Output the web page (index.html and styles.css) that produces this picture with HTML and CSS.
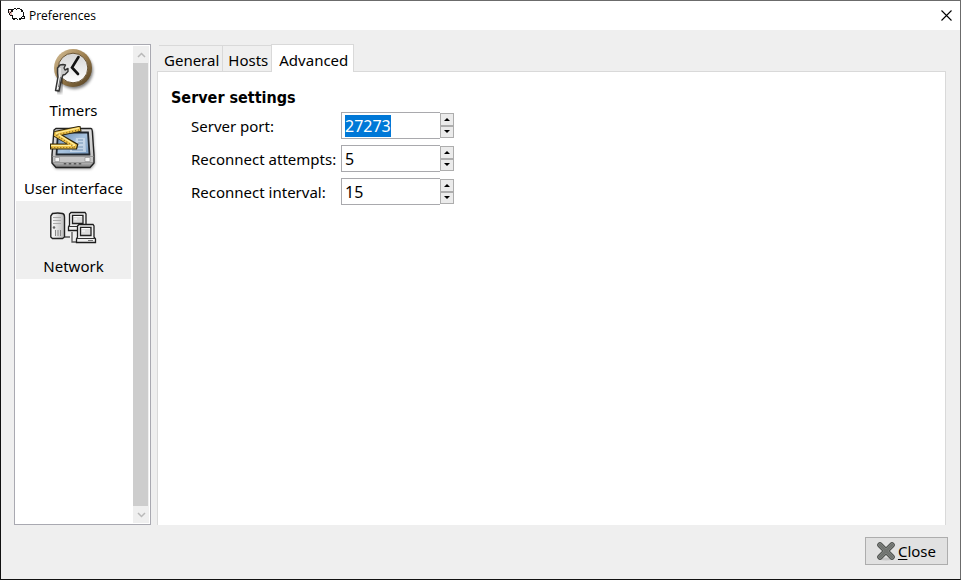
FILE: index.html
```
<!DOCTYPE html>
<html lang="en">
<head>
<meta charset="utf-8">
<title>Preferences</title>
<link rel="stylesheet" href="styles.css">
</head>
<body>
<div class="window">
  <header class="titlebar">
    <svg class="app-icon" width="17" height="13" viewBox="0 0 17 13" shape-rendering="crispEdges" aria-hidden="true">
      <path d="M4 2H14V4H15V9H12V11H5V9H4Z" fill="#fff"/>
      <path d="M1 3H4V7H1Z" fill="#e5b3ae"/>
      <path d="M0 1H4V2H0ZM0 2H1V5H0ZM3 2H5V4H3ZM2 4H3V5H2ZM1 5H2V7H1ZM2 7H5V8H2ZM4 1H6V2H4ZM6 0H8V1H6ZM8 1H9V2H8ZM9 0H12V1H9ZM12 1H14V2H12ZM13 2H15V4H13ZM15 4H16V8H15ZM14 8H16V9H14ZM16 8H17V11H16ZM14 10H16V11H14ZM13 9H14V11H13ZM11 10H13V12H11ZM9 11H10V12H9ZM7 10H9V11H7ZM5 10H7V12H5ZM4 8H5V11H4Z" fill="#111"/>
    </svg>
    <h1 class="title">Preferences</h1>
    <button class="window-close" type="button" aria-label="Close window">
      <svg width="11" height="11" viewBox="0 0 11 11" aria-hidden="true"><path d="M.5 .5L10.500 10.500M10.500 .5L.5 10.500" stroke="#000" stroke-width="1.100"/></svg>
    </button>
  </header>

  <main class="content">
    <nav class="sidebar" aria-label="Categories">
      <div class="categories">
        <button class="category" type="button">
          <svg width="48" height="48" viewBox="1 0 48 48" aria-hidden="true">
            <defs>
              <linearGradient id="rim" x1="0" y1="0" x2="1" y2="1"><stop offset="0" stop-color="#d9c39c"/><stop offset=".5" stop-color="#9a7c4c"/><stop offset="1" stop-color="#4d3b1e"/></linearGradient>
              <linearGradient id="face" x1="0" y1="0" x2="0" y2="1"><stop offset="0" stop-color="#d4d4d4"/><stop offset="1" stop-color="#fff"/></linearGradient>
              <filter id="soft"><feGaussianBlur stdDeviation="1.500"/></filter>
            </defs>
            <circle cx="25.500" cy="22.500" r="18.500" fill="#000" opacity=".5" filter="url(#soft)"/>
            <circle cx="24" cy="20" r="19" fill="url(#rim)"/>
            <circle cx="24" cy="20" r="14.800" fill="url(#face)" stroke="#6b5636"/>
            <path d="M29.500 9L23 19.500L29 26" fill="none" stroke="#111" stroke-width="2.600" stroke-linecap="round"/>
            <path d="M9 45L13 28" fill="none" stroke="#000" stroke-width="7" opacity=".4" filter="url(#soft)"/>
            <path d="M14 16.500L16.500 17L15 20L16 22L19 20.500V23.500L16 26.500L14 27L12.500 31L10 43L6.500 42.500L9 29L8.500 25V20L11 17Z" fill="#c9c9c9" stroke="#333" stroke-width="1.400" stroke-linejoin="round"/>
            <path d="M11 20V26L8.500 41" fill="none" stroke="#fff"/>
            <path d="M11.500 29L9.500 39" fill="none" stroke="#777"/>
          </svg>
          <span>Timers</span>
        </button>
        <button class="category" type="button">
          <svg width="48" height="48" viewBox="1 0 48 48" aria-hidden="true">
            <defs>
              <linearGradient id="screen" x1="0" y1="0" x2="1" y2="1"><stop offset="0" stop-color="#5e83ad"/><stop offset=".5" stop-color="#a9c4df"/><stop offset="1" stop-color="#7397be"/></linearGradient>
              <linearGradient id="case" x1="0" y1="0" x2="0" y2="1"><stop offset="0" stop-color="#ddd"/><stop offset=".85" stop-color="#c4c4c4"/><stop offset="1" stop-color="#777"/></linearGradient>
            </defs>
            <path d="M5 8L44 4L46 38L42 43H7L4 39Z" fill="#000" opacity=".4" filter="url(#soft)"/>
            <path d="M7 2.500H42Q43 2.500 43.300 5L45 29V37L41 41.500H7L3 37V29L5 4Z" fill="url(#case)" stroke="#222" stroke-width="1.400"/>
            <path d="M3.500 30.500H44.500M4 36.500H44" stroke="#999" stroke-width="1"/>
            <path d="M9 6.500H39L40.500 28.500H7.500Z" fill="url(#screen)" stroke="#20262d" stroke-width="1.800"/>
            <path d="M27 12H36L37 26H21V19H26Z" fill="#d5e3ef" opacity=".7"/>
            <path d="M22 21H34M23 24H34M29 14H34M29 17H34" stroke="#7594b5"/>
            <path d="M6 31.500H10.500V35.500H6ZM36 31.500H41V35.500H36Z" fill="#f4f4f4" stroke="#888" stroke-width=".6"/>
            <path d="M16 37V38.500M21 37V38.500M26 37V38.500M31 37V38.500" stroke="#555" stroke-width="2.500"/>
            <g fill="none" stroke-linejoin="bevel"><path d="M32 2.500L6 8L28 20.500H1" stroke="#2f260c" stroke-width="6"/><path d="M31 2.700L6 8L27 20.500H2" stroke="#efc247" stroke-width="4"/><path d="M30 2L7 7L26 19M2 19.500H26" stroke="#fff0a0" stroke-width="1.200"/><path d="M30 4L7 9L26 21.500H2" stroke="#806220" stroke-width="1.200" stroke-dasharray="1 2"/></g>
          </svg>
          <span>User interface</span>
        </button>
        <button class="category selected" type="button" aria-current="true">
          <svg width="48" height="48" viewBox="1 0 48 48" aria-hidden="true">
            <defs><linearGradient id="tower"><stop offset="0" stop-color="#fff"/><stop offset="1" stop-color="#bbb"/></linearGradient></defs>
            <path d="M16 33H21M23 28V38H28" fill="none" stroke="#555" stroke-width="1.300"/>
            <path d="M3.500 9.500Q9 8.500 13.500 9.500Q15.500 10 15.500 13V33L13.500 34.500H3.500L1.800 33V12Z" fill="url(#tower)" stroke="#222" stroke-width="1.400"/>
            <path d="M4 13.500H12M4 16.500H12M4 19.500H12" stroke="#aaa"/>
            <path d="M6.500 26V32M9 26V32M11.500 26V32" stroke="#888"/><circle cx="5" cy="23.500" r="1.300" fill="#666"/>
            <g id="computer"><path d="M22 8.500H36L37 10V21L38.500 23V26.500H19.500V23L20.500 21V10Z" fill="#f1f1f1" stroke="#1c1c1c" stroke-width="1.300"/><path d="M23.500 11.500H34V19.500H23.500Z" fill="#ddd" stroke="#222" stroke-width="1.300"/><path d="M24.500 12.500H33M25 15H28" stroke="#fff"/><path d="M20 22.500H38" stroke="#333"/><path d="M31 24.500H36" stroke="#777"/></g>
            <use href="#computer" x="8" y="12"/>
          </svg>
          <span>Network</span>
        </button>
      </div>
      <div class="scrollbar">
        <button class="scroll-step" type="button" aria-label="Scroll up"><svg width="9" height="6" viewBox="0 0 9 6" aria-hidden="true"><path d="M1 5L4.500 1.500L8 5"/></svg></button>
        <div class="scroll-thumb"></div>
        <button class="scroll-step" type="button" aria-label="Scroll down"><svg width="9" height="6" viewBox="0 0 9 6" aria-hidden="true"><path d="M1 1L4.500 4.500L8 1"/></svg></button>
      </div>
    </nav>

    <section class="notebook">
      <div class="tabs" role="tablist">
        <button class="tab" type="button" role="tab" aria-selected="false">General</button>
        <button class="tab" type="button" role="tab" aria-selected="false">Hosts</button>
        <button class="tab active" type="button" role="tab" aria-selected="true">Advanced</button>
      </div>
      <div class="panel" role="tabpanel">
        <h2 class="heading">Server settings</h2>
        <form class="settings">
          <label for="port">Server port:</label>
          <div class="spin">
            <input id="port" type="text" inputmode="numeric" value="27273">
            <div class="steps"><button type="button" class="step up" aria-label="Increase port"></button><button type="button" class="step down" aria-label="Decrease port"></button></div>
          </div>
          <label for="attempts">Reconnect attempts:</label>
          <div class="spin">
            <input id="attempts" type="text" inputmode="numeric" value="5">
            <div class="steps"><button type="button" class="step up" aria-label="Increase attempts"></button><button type="button" class="step down" aria-label="Decrease attempts"></button></div>
          </div>
          <label for="interval">Reconnect interval:</label>
          <div class="spin">
            <input id="interval" type="text" inputmode="numeric" value="15">
            <div class="steps"><button type="button" class="step up" aria-label="Increase interval"></button><button type="button" class="step down" aria-label="Decrease interval"></button></div>
          </div>
        </form>
      </div>
    </section>
  </main>

  <footer class="actions">
    <button class="close" type="button">
      <svg width="20" height="20" viewBox="0 0 20 20" aria-hidden="true">
        <ellipse cx="10" cy="18" rx="8" ry="1.500" fill="#000" opacity=".12"/>
        <path d="M4 4L16 16M16 4L4 16" stroke="#4b4e4b" stroke-width="5.600" stroke-linecap="round"/>
        <path d="M4 4L16 16M16 4L4 16" stroke="#8b8e8b" stroke-width="3.800" stroke-linecap="round"/>
        <path d="M4 4L16 16M16 4L4 16" stroke="#717471" stroke-width="2.500" stroke-linecap="round"/>
      </svg>
      <span><u>C</u>lose</span>
    </button>
  </footer>
</div>
<script src="script.js"></script>
</body>
</html>
```
FILE: styles.css
```
* { box-sizing: border-box; }

body {
  margin: 0;
  font: 15px/22px "Noto Sans", sans-serif;
  color: #000;
}

button, input {
  margin: 0;
  padding: 0;
  border: 0;
  background: none;
  font: inherit;
  color: inherit;
}

svg { display: block; flex: none; }

.window {
  display: flex;
  flex-direction: column;
  min-height: 100vh;
  border: 1px solid;
  border-color: #6b6b6b #6b6b6b #111 #111;
  background: #efefef;
}

.titlebar {
  display: flex;
  align-items: center;
  gap: 4px;
  height: 29px;
  padding: 0 8px 0 7px;
  background: #fff;
}

.app-icon { margin-bottom: 2px; }

.title {
  flex: 1;
  margin: 0;
  font: 12px/16px "Open Sans", sans-serif;
}

.content {
  display: flex;
  flex: 1;
  gap: 6px;
  padding: 14px 14px 0 13px;
}

.sidebar {
  display: flex;
  width: 137px;
  padding: 0 1px;
  border: 1px solid #a9a9b1;
  background: #fff;
}

.categories { flex: 1; margin-right: 2px; }

.category {
  display: flex;
  flex-direction: column;
  align-items: center;
  gap: 3px;
  width: 100%;
  padding: 3px 0 2px;
  white-space: nowrap;
}

.selected { background: #efefef; }

.scrollbar {
  display: flex;
  flex-direction: column;
  width: 16px;
  margin: 1px 0;
  background: #efefef;
}

.scroll-step {
  display: grid;
  place-items: center;
  height: 17px;
}

.scroll-step path { fill: none; stroke: #b9b9b9; stroke-width: 1.5; }

.scroll-thumb {
  flex: 1;
  margin-right: 1px;
  background: #cdcdcd;
}

.notebook {
  display: flex;
  flex: 1;
  flex-direction: column;
}

.tabs {
  display: flex;
  align-items: flex-end;
  margin-bottom: -1px;
  padding-left: 2px;
}

.tab {
  height: 26px;
  margin-bottom: 1px;
  padding: 2px 3px 0 5px;
  border: 1px solid #d9d9d9;
  border-width: 1px 1px 0 0;
}

.tab.active {
  height: 28px;
  margin: 0 0 0 -1px;
  padding: 2px 5px 0 7px;
  border-width: 1px 1px 0;
  background: #fff;
  z-index: 1;
}

.panel {
  flex: 1;
  padding: 15px 13px;
  border: 1px solid #d9d9d9;
  border-bottom: 0;
  background: #fff;
}

.heading {
  margin: 0 0 3px;
  font: bold 16px/22px "DejaVu Sans Condensed", sans-serif;
}

.settings {
  display: grid;
  grid-template-columns: 150px 113px;
  row-gap: 6px;
  align-items: center;
  padding-left: 20px;
}

.settings label { white-space: nowrap; }

.spin { display: flex; height: 27px; }

.spin input {
  flex: 1;
  min-width: 0;
  padding: 0 3px;
  border: 1px solid #a9a9ad;
  border-right: 0;
  outline: 0;
  font-size: 16px;
  caret-color: transparent;
}

.spin input::selection { background: #0078d7; color: #fff; }

.steps {
  display: flex;
  flex-direction: column;
  width: 14px;
  padding: 1px 0;
}

.step {
  display: grid;
  flex: 1;
  place-items: center;
  border: 1px solid #adadad;
  background: #ebebeb;
}

.step::before { content: ""; border: 3px solid transparent; }
.up::before { border-top: 0; border-bottom-color: #000; }
.down::before { border-bottom: 0; border-top-color: #000; }

.actions {
  display: flex;
  justify-content: flex-end;
  padding: 12px 12px 14px;
}

.close {
  display: flex;
  align-items: center;
  gap: 2px;
  height: 28px;
  padding: 0 11px 0 10px;
  border: 1px solid #adadad;
  background: #e1e1e1;
}

.close u { text-underline-offset: 2px; }
```
FILE: script.js
```
const port = document.getElementById("port");
port.focus();
port.select();
```
